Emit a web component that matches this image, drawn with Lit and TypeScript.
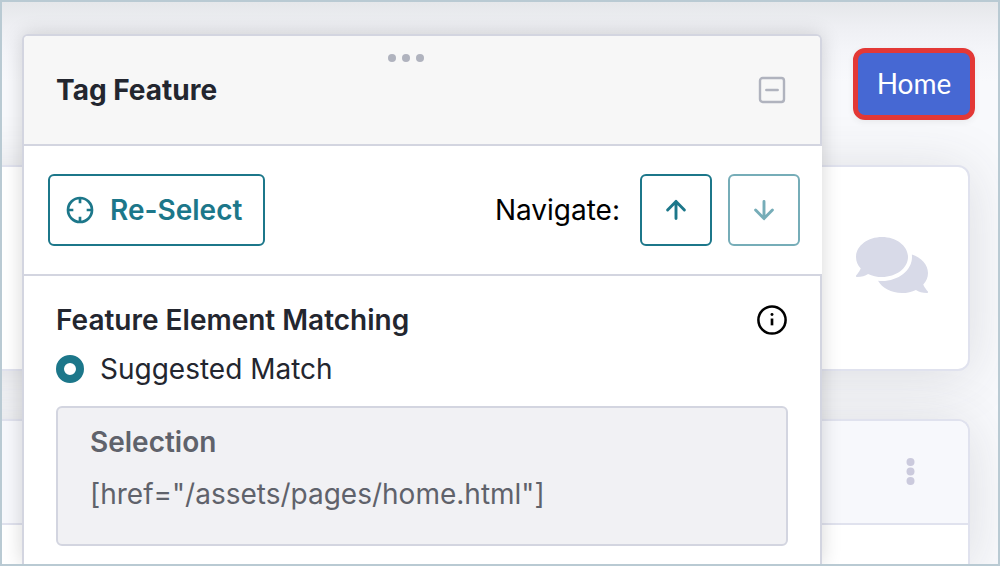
import { LitElement, html, css } from "lit";
import { customElement, state } from "lit/decorators.js";

@customElement("page-backdrop")
class PageBackdrop extends LitElement {
  static styles = css`
    :host {
      display: flex;
      flex-direction: column;
      height: 100%;
      box-sizing: border-box;
      padding: 46px 28px 0 0;
      background: linear-gradient(#e5e7ea 0, #eeeff3 24px, #f4f5f9 48px, #f8f9fc 80px);
    }
    .bar {
      display: flex;
      justify-content: flex-end;
      margin: 0 -5px 45px 0;
    }
    .home {
      display: flex;
      align-items: center;
      justify-content: center;
      box-sizing: border-box;
      min-width: 122px;
      height: 72px;
      padding-bottom: 2px;
      border: 5px solid #e33836;
      border-radius: 12px;
      background: #4668d3;
      box-shadow: 0 2px 6px rgba(58, 59, 69, 0.08);
      color: #fff;
      font: 400 28px/36px Lato, sans-serif;
      text-decoration: none;
    }
    .card {
      margin-left: -56px;
      border: 2px solid #e0e2ee;
      border-radius: 12px;
      background: #fff;
      box-shadow: 0 5px 56px rgba(58, 59, 69, 0.15);
    }
    .stat {
      display: flex;
      justify-content: flex-end;
      padding: 66px 40px 72px;
      margin-bottom: 48px;
    }
    .stat svg {
      width: 72px;
      height: 64px;
      fill: #d8dae8;
    }
    .chart {
      flex: 1;
      border-bottom: 0;
      border-radius: 12px 12px 0 0;
    }
    .chart-head {
      display: flex;
      align-items: center;
      justify-content: flex-end;
      height: 102px;
      padding-right: 52px;
      border-bottom: 2px solid #e0e2ee;
      border-radius: 10px 10px 0 0;
      background: #f7f8fc;
    }
    .more {
      display: flex;
      padding: 0;
      border: 0;
      background: none;
    }
    .more svg {
      width: 12px;
      height: 28px;
      fill: #cbcadd;
    }
  `;

  render() {
    return html`
      <nav class="bar"><a class="home" href="#home">Home</a></nav>
      <section class="card stat">
        <svg viewBox="0 0 576 512" aria-hidden="true">
          <path d="M416 192c0-88.4-93.1-160-208-160S0 103.6 0 192c0 34.3 14.1 65.9 38 92-13.4 30.2-35.5 54.2-35.8 54.5-2.2 2.3-2.8 5.7-1.5 8.7S4.8 352 8 352c36.6 0 66.9-12.3 88.7-25 32.2 15.7 70.3 25 111.3 25 114.9 0 208-71.6 208-160zm122 220c23.9-26 38-57.7 38-92 0-66.9-53.5-124.2-129.3-148.1.9 6.6 1.3 13.3 1.3 20.1 0 105.9-107.7 192-240 192-10.8 0-21.3-.8-31.7-1.9C207.8 439.6 281.8 480 368 480c41 0 79.1-9.2 111.3-25 21.8 12.7 52.1 25 88.7 25 3.2 0 6.1-1.9 7.3-4.8 1.3-2.9.7-6.3-1.5-8.7-.3-.2-22.4-24.2-35.8-54.5z" />
        </svg>
      </section>
      <section class="card chart">
        <div class="chart-head">
          <button class="more" type="button" aria-label="More">
            <svg viewBox="0 0 12 28"><circle cx="6.5" cy="4" r="4" /><circle cx="6.5" cy="13.5" r="4" /><circle cx="6.5" cy="23.1" r="4" /></svg>
          </button>
        </div>
      </section>
    `;
  }
}

@customElement("tag-panel")
class TagPanel extends LitElement {
  @state() private match = "suggested";

  static styles = css`
    :host {
      display: block;
      box-sizing: border-box;
      border: 2px solid #d3d5e0;
      border-bottom: 0;
      border-radius: 6px 6px 0 0;
      background: #fff;
      box-shadow: 0 0 20px rgba(0, 0, 0, 0.16);
      color: #23262f;
      font: 400 28px/36px Inter, sans-serif;
    }
    h1, h2, h3, p {
      margin: 0;
      font-size: 28px;
      line-height: 36px;
    }
    button {
      display: flex;
      align-items: center;
      justify-content: center;
      box-sizing: border-box;
      background: none;
      font: inherit;
    }
    svg {
      display: block;
      width: 32px;
      height: 32px;
      fill: none;
      stroke: currentColor;
    }
    .head {
      display: flex;
      flex-direction: column;
      gap: 10px;
      padding: 18px 32px 36px;
      border-radius: 4px 4px 0 0;
      background: #f7f7f7;
    }
    .grip {
      display: flex;
      justify-content: center;
      gap: 6px;
      padding-right: 32px;
    }
    .grip i {
      width: 8px;
      height: 8px;
      border-radius: 50%;
      background: #b0b3be;
    }
    .row {
      display: flex;
      align-items: center;
      justify-content: space-between;
    }
    .title {
      font-weight: 700;
    }
    .icon {
      padding: 0;
      border: 0;
      color: #b0b3be;
    }
    .info {
      color: #000;
    }
    .tools {
      display: flex;
      align-items: center;
      gap: 16px;
      padding: 28px 22px 28px 24px;
      margin-right: -2px;
      border: solid #d3d5e0;
      border-width: 2px 0;
      background: #fff;
    }
    .action {
      height: 72px;
      border: 2px solid #1c778a;
      border-radius: 6px;
      color: #1c778a;
    }
    .reselect {
      gap: 14px;
      padding: 0 21px 0 14px;
      margin-right: auto;
      font-weight: 600;
    }
    .nav-label {
      margin-right: 4px;
      color: #000;
    }
    .step {
      width: 72px;
      padding: 0;
    }
    .step:disabled {
      opacity: 0.6;
    }
    .body {
      padding: 24px 32px 0;
    }
    .section {
      font-weight: 600;
    }
    .body .row {
      height: 40px;
    }
    .option {
      display: flex;
      align-items: center;
      gap: 16px;
      margin: 11px 0 19px;
    }
    .option input {
      appearance: none;
      box-sizing: border-box;
      width: 28px;
      height: 28px;
      margin: 0;
      border: 2px solid #1c778a;
      border-radius: 50%;
      background: #fff;
    }
    .option input:checked {
      border-width: 8px;
    }
    .selection {
      display: flex;
      flex-direction: column;
      gap: 16px;
      padding: 16px 32px 32px;
      border: 2px solid #d3d5e0;
      border-radius: 6px;
      background: #f1f1f4;
      color: #5f626b;
    }
    .selection h3 {
      font-weight: 600;
    }
  `;

  render() {
    return html`
      <header class="head">
        <div class="grip"><i></i><i></i><i></i></div>
        <div class="row">
          <h1 class="title">Tag Feature</h1>
          <button class="icon" type="button" aria-label="Collapse">
            <svg viewBox="0 0 24 24" stroke-width="1.8" stroke-linecap="round" stroke-linejoin="round">
              <rect x="3" y="3" width="18" height="18" rx="2" />
              <path d="M7.7 12h8.6" />
            </svg>
          </button>
        </div>
      </header>
      <div class="tools">
        <button class="action reselect" type="button">
          <svg viewBox="0 0 24 24" stroke-width="2">
            <circle cx="12" cy="12" r="9" />
            <path d="M12 3v4M12 21v-4M3 12h4M21 12h-4" />
          </svg>
          Re-Select
        </button>
        <span class="nav-label">Navigate:</span>
        <button class="action step" type="button" aria-label="Parent element">
          <svg viewBox="0 0 32 32" stroke-width="2.9" stroke-linecap="round" stroke-linejoin="round">
            <path d="M16 24.6V7.4M7.6 16L16 7.4l8.4 8.6" />
          </svg>
        </button>
        <button class="action step" type="button" aria-label="Child element" disabled>
          <svg viewBox="0 0 32 32" stroke-width="2.9" stroke-linecap="round" stroke-linejoin="round">
            <path d="M16 7.4v17.2M7.6 16l8.4 8.6 8.4-8.6" />
          </svg>
        </button>
      </div>
      <div class="body">
        <div class="row">
          <h2 class="section">Feature Element Matching</h2>
          <button class="icon info" type="button" aria-label="About matching">
            <svg viewBox="0 0 24 24" stroke-width="1.9">
              <circle cx="12" cy="12" r="10.2" />
              <path d="M12 10.9v5.1" stroke-width="2" />
              <circle cx="12" cy="7.9" r="1.1" fill="currentColor" stroke="none" />
            </svg>
          </button>
        </div>
        <label class="option">
          <input
            type="radio"
            name="match"
            value="suggested"
            .checked=${this.match === "suggested"}
            @change=${() => (this.match = "suggested")}
          />
          Suggested Match
        </label>
        <div class="selection">
          <h3>Selection</h3>
          <p>[href="/assets/pages/home.html"]</p>
        </div>
      </div>
    `;
  }
}

@customElement("app-root")
class AppRoot extends LitElement {
  static styles = css`
    :host {
      display: block;
      position: relative;
      box-sizing: border-box;
      height: 100vh;
      overflow: hidden;
      border: 2px solid #b9cad3;
    }
    .panel {
      position: absolute;
      inset: 32px 176px 0 20px;
    }
  `;

  render() {
    return html`
      <page-backdrop></page-backdrop>
      <tag-panel class="panel"></tag-panel>
    `;
  }
}
